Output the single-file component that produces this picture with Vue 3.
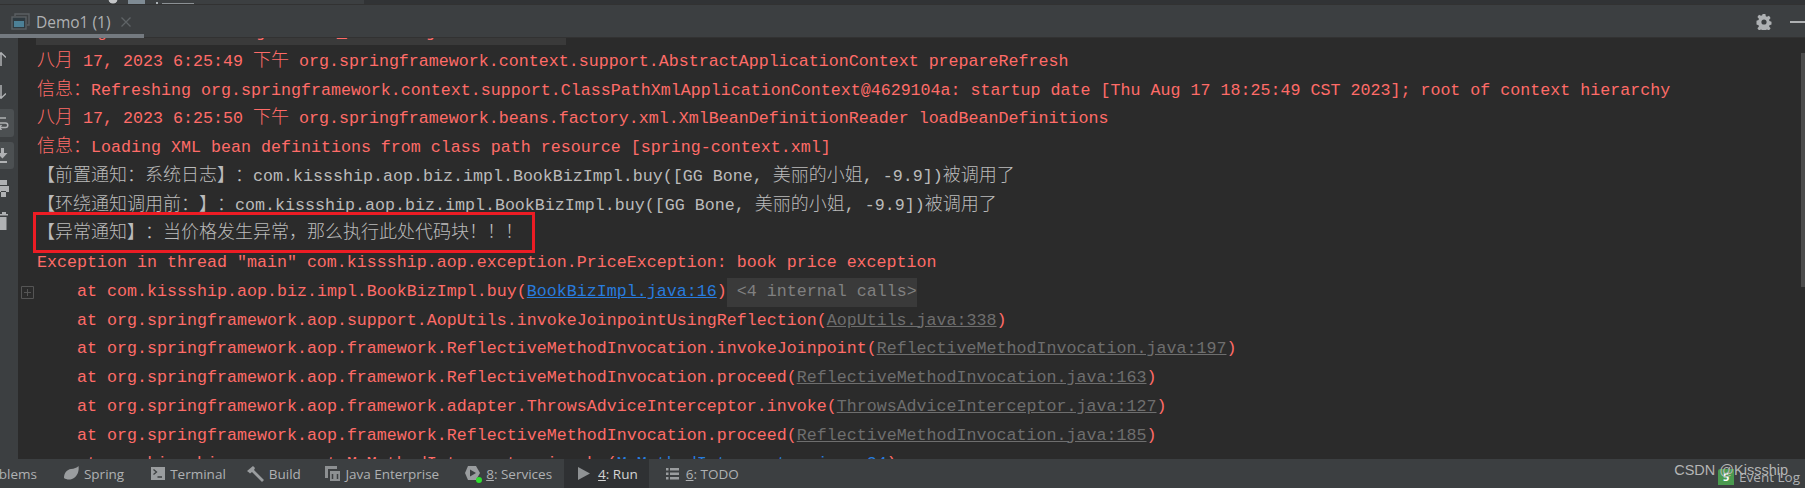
<script setup>
const cjk = /([\u3000-\u9fff\uff00-\uffef]+)/
function parts(text) {
  return text.split(cjk).filter(Boolean).map((t) => ({ t, c: cjk.test(t) }))
}
const L = (text, kind = 'err', extra = {}) => ({ parts: parts(text), kind, ...extra })
const lines = [
  L('C:\\Program Files\\Java\\jdk1.8.0_231\\bin\\java.exe'),
  L('八月 17, 2023 6:25:49 下午 org.springframework.context.support.AbstractApplicationContext prepareRefresh'),
  L('信息\uff1aRefreshing org.springframework.context.support.ClassPathXmlApplicationContext@4629104a: startup date [Thu Aug 17 18:25:49 CST 2023]; root of context hierarchy'),
  L('八月 17, 2023 6:25:50 下午 org.springframework.beans.factory.xml.XmlBeanDefinitionReader loadBeanDefinitions'),
  L('信息\uff1aLoading XML bean definitions from class path resource [spring-context.xml]'),
  L('【前置通知\uff1a系统日志】\uff1acom.kissship.aop.biz.impl.BookBizImpl.buy([GG Bone, 美丽的小姐, -9.9])被调用了', 'out'),
  L('【环绕通知调用前\uff1a】\uff1acom.kissship.aop.biz.impl.BookBizImpl.buy([GG Bone, 美丽的小姐, -9.9])被调用了', 'out'),
  L('【异常通知】\uff1a当价格发生异常\uff0c那么执行此处代码块\uff01\uff01\uff01', 'out'),
  L('Exception in thread "main" com.kissship.aop.exception.PriceException: book price exception'),
  L('at com.kissship.aop.biz.impl.BookBizImpl.buy(', 'err', { at: true, link: 'BookBizImpl.java:16', blue: true, chip: '<4 internal calls>' }),
  L('at org.springframework.aop.support.AopUtils.invokeJoinpointUsingReflection(', 'err', { at: true, link: 'AopUtils.java:338' }),
  L('at org.springframework.aop.framework.ReflectiveMethodInvocation.invokeJoinpoint(', 'err', { at: true, link: 'ReflectiveMethodInvocation.java:197' }),
  L('at org.springframework.aop.framework.ReflectiveMethodInvocation.proceed(', 'err', { at: true, link: 'ReflectiveMethodInvocation.java:163' }),
  L('at org.springframework.aop.framework.adapter.ThrowsAdviceInterceptor.invoke(', 'err', { at: true, link: 'ThrowsAdviceInterceptor.java:127' }),
  L('at org.springframework.aop.framework.ReflectiveMethodInvocation.proceed(', 'err', { at: true, link: 'ReflectiveMethodInvocation.java:185' }),
  L('at com.kissship.aop.aspect.MyMethodInterceptor.invoke(', 'err', { at: true, link: 'MyMethodInterceptor.java:34', blue: true }),
]
</script>

<template>
  <div class="app">
    <div class="topstrip">
      <div class="strip-left">
        <svg class="strip-icons" width="100" height="4" viewBox="0 0 100 4">
          <circle cx="5" cy="-1" r="4.5" fill="#c4c6c8" />
          <rect x="20" y="0" width="17" height="4" fill="#7f8b94" />
          <rect x="48" y="2" width="2" height="2" fill="#aab0b4" />
          <rect x="54" y="3" width="32" height="1" fill="#8b9094" />
        </svg>
      </div>
    </div>

    <div class="tabbar">
      <div class="tab">
        <svg class="tab-icon" width="19" height="17" viewBox="0 0 19 17">
          <path d="M4 3V1h14v11h-2" fill="none" stroke="#5b6063" stroke-width="1.4" />
          <rect x="1" y="4" width="14" height="12" fill="#2f3a40" stroke="#5b6063" stroke-width="1.4" />
          <rect x="3" y="8" width="10" height="6" fill="#4c8096" />
        </svg>
        <span class="tab-title">Demo1 (1)</span>
        <svg class="tab-x" width="10" height="10" viewBox="0 0 10 10">
          <path d="M.5.5l9 9M9.5.5l-9 9" stroke="#5f6467" stroke-width="1.3" fill="none" />
        </svg>
      </div>
      <div class="tab-actions">
        <svg class="gear" width="16" height="16" viewBox="0 0 16 16">
          <path fill="#aeb1b3" fill-rule="evenodd" d="M6.6 0h2.8l.4 2.2 1.2.6 2-1 1.6 2.2-1.5 1.7.3 1.3 2.1.8v2.6l-2.1.8-.3 1.3 1.5 1.7-1.6 2.2-2-1-1.2.6-.4 2.2H6.6l-.4-2.2-1.2-.6-2 1-1.6-2.2 1.5-1.7-.3-1.3-2.1-.8V6.800l2.100-.8.3-1.3L1.400 3 3 .8l2 1 1.200-.6zM8 5.400a2.600 2.600 0 1 0 0 5.200 2.600 2.600 0 0 0 0-5.200z" />
        </svg>
        <span class="minus"></span>
      </div>
    </div>

    <div class="body">
      <aside class="toolbar">
        <svg class="tool t-up" width="10" height="14" viewBox="0 0 10 14"><path d="M0 5.500L5 .8 10 5.500M5 1v13" fill="none" stroke="#afb1b3" stroke-width="1.500" /></svg>
        <svg class="tool t-down" width="10" height="14" viewBox="0 0 10 14"><path d="M0 8.500L5 13.200 10 8.500M5 13V0" fill="none" stroke="#afb1b3" stroke-width="1.500" /></svg>
        <div class="toggled t-wrap">
          <svg width="14" height="14" viewBox="0 0 14 14"><path d="M0 2h9M0 7h8.500a2.300 2.300 0 0 1 0 4.600H2M4.500 9L2 11.600l2.500 2.400M0 12h.5" fill="none" stroke="#afb1b3" stroke-width="1.500" /></svg>
        </div>
        <div class="toggled t-end">
          <svg width="14" height="16" viewBox="0 0 14 16"><path d="M4 0h3v5h3.500L5.500 10.500 0 5h4zM0 13h10v2H0z" fill="#afb1b3" /></svg>
        </div>
        <svg class="tool t-print" width="11" height="17" viewBox="0 0 11 17"><path d="M2 0h7v5H2zM0 6h11v6H8v-1H3v1H0zM3 12h5v5H3z" fill="#afb1b3" /></svg>
        <svg class="tool t-trash" width="9" height="18" viewBox="0 0 9 18"><path d="M3 0h4v2h2v1.500H0V2h3zM0 5h7.500v13H0z" fill="#afb1b3" /></svg>
      </aside>

      <main class="console">
        <div class="fold-bg"></div>
        <svg class="fold" width="13" height="13" viewBox="0 0 13 13">
          <path d="M.5.5h12v12H.5zM3 6.500h7M6.500 3v7" fill="none" stroke="#555" />
        </svg>
        <div class="scrollthumb"></div>
        <div class="rows">
          <div v-for="(line, i) in lines" :key="i" class="row" :class="[line.kind, { at: line.at }]">
            <template v-for="(p, j) in line.parts" :key="j">
              <span v-if="p.c" class="cjk" lang="zh-CN">{{ p.t }}</span>
              <template v-else>{{ p.t }}</template>
            </template>
            <template v-if="line.link"><a class="link" :class="{ blue: line.blue }">{{ line.link }}</a>)</template>
            <span v-if="line.chip" class="chip">{{ line.chip }}</span>
          </div>
        </div>
        <div class="redbox"></div>
      </main>
    </div>

    <footer class="status">
      <div class="tools">
        <span class="item problems">Problems</span>
        <span class="item spring">
          <svg width="16" height="15" viewBox="0 0 16 15"><path d="M15.500 0c.8 5-1 11-6.500 13-3 1-6 .5-8-1C1 7 4 3.500 8 3c3-.4 6-1 7.500-3z" fill="#9a9d9f" /></svg>
          Spring
        </span>
        <span class="item terminal">
          <svg width="14" height="13" viewBox="0 0 14 13"><rect width="14" height="13" fill="#9a9d9f" /><path d="M2.500 2.500l3 2.500-3 2.500M6.500 10H11" fill="none" stroke="#3c3f41" stroke-width="1.300" /></svg>
          Terminal
        </span>
        <span class="item build">
          <svg width="17" height="16" viewBox="0 0 17 16"><path d="M0 5L6 0l2 2-1 2 10 10-2 2L5 6 3 7.500 2 6.500z" fill="#9a9d9f" /></svg>
          Build
        </span>
        <span class="item java">
          <svg width="15" height="15" viewBox="0 0 15 15"><path d="M0 0h12v3H3v9H0z" fill="#8d9092" /><rect x="5" y="5" width="10" height="10" fill="#8d9092" /><path d="M7.500 8v5M12.500 8v5" stroke="#3c3f41" stroke-width="1.500" /></svg>
          Java Enterprise
        </span>
        <span class="item services">
          <span class="svc-icon">
            <svg width="17" height="17" viewBox="0 0 17 17"><path d="M4 1h8l4 7-4 7H4L1 8z" fill="#9a9d9f" /><path d="M6 4.500L12 8l-6 3.500z" fill="#3c3f41" /></svg>
            <i class="dot"></i>
          </span>
          <span><u>8</u>: Services</span>
        </span>
        <span class="item run">
          <svg width="12" height="13" viewBox="0 0 12 13"><path d="M0 0l12 6.500L0 13z" fill="#8f9294" /></svg>
          <span class="run-label"><u>4</u>: Run</span>
        </span>
        <span class="item todo">
          <svg width="13" height="12" viewBox="0 0 13 12"><path d="M0 0h2.500v2.500H0zM4 0h9v2.500H4zM0 4.500h2.500V7H0zM4 4.500h9V7H4zM0 9h2.500v2.500H0zM4 9h9v2.500H4z" fill="#9a9d9f" /></svg>
          <span><u>6</u>: TODO</span>
        </span>
      </div>
      <div class="eventlog">
        <span class="badge">5</span>
        <span>Event Log</span>
      </div>
      <div class="watermark">CSDN @Kissship</div>
    </footer>
  </div>
</template>

<style scoped>
.app {
  width: 1805px;
  height: 488px;
  display: flex;
  flex-direction: column;
  overflow: hidden;
  background: #2b2b2b;
  font-family: "Open Sans", "Noto Sans", sans-serif;
}
.topstrip {
  height: 5px;
  flex: none;
  background: #313335;
  border-bottom: 1px solid #323232;
  box-sizing: border-box;
}
.strip-left {
  height: 4px;
  padding-left: 108px;
  width: 256px;
  background: #3c3f41;
}
.strip-icons { display: block; }
.tabbar {
  height: 33px;
  flex: none;
  background: #3c3f41;
  display: flex;
  align-items: stretch;
  justify-content: space-between;
  border-bottom: 1px solid #323232;
  box-sizing: border-box;
}
.tab {
  width: 144px;
  box-sizing: border-box;
  border-bottom: 4px solid #747a80;
  margin-bottom: -1px;
  display: flex;
  align-items: center;
  padding: 4px 0 0 11px;
  color: #afb1b3;
  font-size: 15.5px;
  position: relative;
  z-index: 2;
}
.tab-icon { flex: none; }
.tab-title { margin-left: 6px; white-space: nowrap; }
.tab-x { margin-left: 10px; flex: none; }
.tab-actions {
  display: flex;
  align-items: center;
  padding-top: 1px;
}
.gear { margin-right: 18px; }
.minus {
  display: block;
  width: 15px;
  height: 2px;
  background: #afb1b3;
}
.body {
  flex: 1;
  min-height: 0;
  display: flex;
}
.toolbar {
  width: 18px;
  flex: none;
  background: #3c3f41;
  display: flex;
  flex-direction: column;
  align-items: flex-start;
  padding-top: 14px;
  box-sizing: border-box;
  overflow: hidden;
}
.tool { display: block; flex: none; margin-left: -4px; }
.t-down { margin-top: 19px; }
.toggled {
  width: 14px;
  background: #4c5052;
  border-radius: 0 3px 3px 0;
  display: flex;
  align-items: center;
  overflow: hidden;
  flex: none;
}
.toggled svg { flex: none; margin-left: -3px; }
.t-wrap { height: 28px; margin-top: 10px; }
.t-end { height: 27px; margin-top: 5px; }
.t-print { margin-top: 11px; margin-left: -2px; }
.t-trash { margin-top: 15px; margin-left: -1px; }
.console {
  flex: 1;
  min-width: 0;
  position: relative;
  overflow: hidden;
  background: #2b2b2b;
}
.fold-bg {
  position: absolute;
  left: 18px;
  top: 0;
  width: 530px;
  height: 7px;
  background: #3a3a3a;
}
.fold {
  position: absolute;
  left: 3px;
  top: 248px;
}
.scrollthumb {
  position: absolute;
  right: 0;
  top: 15px;
  width: 4px;
  height: 234px;
  background: #4b4b4b;
}
.rows {
  position: relative;
  margin-top: -19px;
  padding-left: 19px;
}
.row {
  height: 28.78px;
  line-height: 28.78px;
  font-family: "Liberation Mono", "DejaVu Sans Mono", monospace;
  font-size: 16.67px;
  white-space: pre;
}
.row.err { color: #ff6b68; }
.row.out { color: #bbbbbb; }
.row.at { padding-left: 40px; }
.cjk {
  font-family: "Noto Sans CJK SC", sans-serif;
  font-size: 18px;
  font-weight: 300;
  line-height: 1;
  text-spacing-trim: space-all;
  font-feature-settings: "palt" 0, "chws" 0;
}
.link {
  color: #6e6e6e;
  text-decoration: underline;
}
.link.blue { color: #287bde; }
.chip {
  display: inline-block;
  height: 29px;
  padding-left: 10px;
  width: 180px;
  color: #808080;
  background: #3a3a3a;
  vertical-align: top;
}
.redbox {
  position: absolute;
  left: 15px;
  top: 174px;
  width: 502px;
  height: 41px;
  box-sizing: border-box;
  border: 3px solid #ed1c24;
  pointer-events: none;
}
.status {
  height: 29px;
  flex: none;
  background: #3c3f41;
  position: relative;
  display: flex;
  justify-content: space-between;
  align-items: stretch;
  font-size: 13.5px;
  color: #afb1b3;
  overflow: hidden;
  z-index: 1;
}
.tools {
  display: flex;
  align-items: stretch;
  margin-left: -23px;
}
.item {
  display: flex;
  align-items: center;
  gap: 5px;
  white-space: nowrap;
}
.item svg { flex: none; }
.spring { margin-left: 26px; }
.terminal { margin-left: 27px; }
.build { margin-left: 21px; }
.java { margin-left: 24.5px; }
.services { margin-left: 25px; }
.svc-icon { position: relative; display: block; height: 17px; }
.svc-icon svg { display: block; }
.dot {
  position: absolute;
  right: -1px;
  bottom: -1px;
  width: 6px;
  height: 6px;
  border-radius: 50%;
  background: #2fe02f;
}
.run {
  margin-left: 12px;
  background: #2f3133;
  padding: 0 11px 0 14px;
  gap: 8px;
  color: #d4d4d4;
}
.todo { margin-left: 17px; gap: 7px; }
.eventlog {
  display: flex;
  align-items: center;
  padding-right: 5px;
  padding-top: 6px;
  gap: 5px;
}
.badge {
  width: 16px;
  height: 16px;
  background: #4a9a4f;
  color: #fff;
  font-size: 11px;
  font-weight: 700;
  text-align: center;
  line-height: 16px;
  border-radius: 2px 0 0 0;
}
.watermark {
  position: absolute;
  right: 17px;
  top: 1px;
  font-family: "Liberation Sans", Arial, sans-serif;
  font-size: 14.5px;
  color: #b5b5b5;
  line-height: 20px;
}
</style>
